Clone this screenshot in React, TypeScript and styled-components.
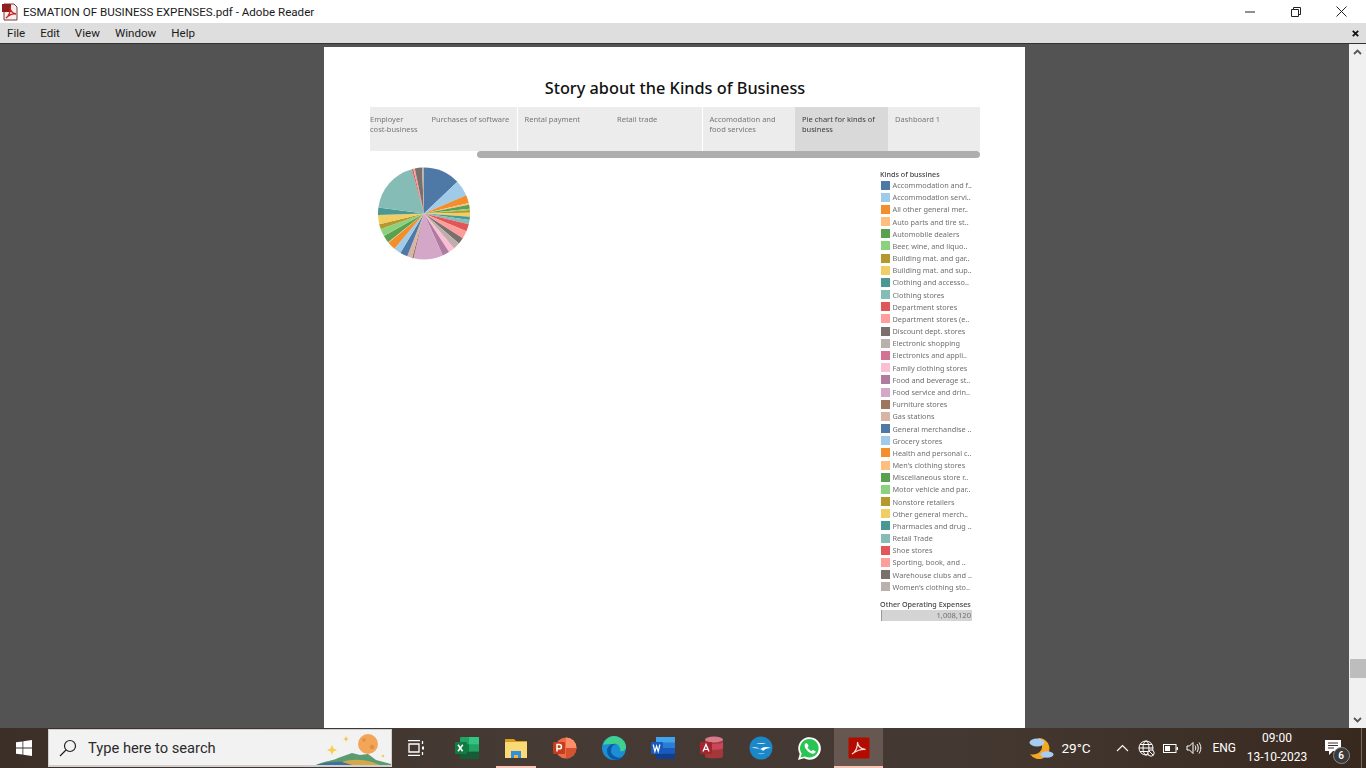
import React from 'react';
import styled, { createGlobalStyle } from 'styled-components';

const GlobalStyle = createGlobalStyle`
  html, body { margin: 0; padding: 0; height: 100%; overflow: hidden; background: #535353; }
  #root { height: 100%; }
`;

const Shell = styled.div`
  width: 1366px;
  height: 768px;
  display: flex;
  flex-direction: column;
  overflow: hidden;
  font-family: Roboto, 'Open Sans', sans-serif;
`;

/* title bar */
const TitleBar = styled.div`
  height: 23px;
  background: #fff;
  display: flex;
  align-items: center;
  padding: 0 2px 0 2px;
  flex: none;
`;
const TitleText = styled.div`
  margin-left: 4px;
  font-size: 11.6px;
  color: #1a1a1a;
  flex: 1;
`;
const WinButton = styled.div`
  width: 45.5px;
  height: 23px;
  display: flex;
  align-items: center;
  justify-content: center;
`;

const MenuBar = styled.div`
  height: 20px;
  background: #dedede;
  border-bottom: 1px solid #333;
  display: flex;
  align-items: center;
  padding: 0 7px 0 7px;
  gap: 15px;
  flex: none;
`;
const MenuItem = styled.span`
  font-size: 11.6px;
  color: #1c1c1c;
`;
const MenuClose = styled.span`
  margin-left: auto;
  display: flex;
`;

/* document viewing area */
const Workspace = styled.div`
  flex: 1;
  display: flex;
  min-height: 0;
  background: #535353;
`;
const PageArea = styled.div`
  flex: 1;
  padding: 3px 0 0 324px;
`;
const Page = styled.div`
  width: 701px;
  height: 100%;
  background: #fff;
  box-sizing: border-box;
  padding: 30px 45px 0 46px;
`;
const StoryTitle = styled.h1`
  margin: 0 0 7px;
  height: 23px;
  line-height: 23px;
  text-align: center;
  font-family: 'Noto Sans', sans-serif;
  font-size: 16.3px;
  font-weight: 500;
  color: #111;
`;
const TabStrip = styled.div`
  height: 44px;
  background: #ececec;
  display: flex;
`;
const Tab = styled.div<{ $w: number; $active?: boolean; $flush?: boolean; $sep?: boolean }>`
  width: ${(p) => p.$w}px;
  flex: none;
  box-sizing: border-box;
  padding: 7px 0 0 ${(p) => (p.$flush ? 0 : 7)}px;
  font-family: 'Noto Sans', sans-serif;
  font-size: 7.5px;
  line-height: 10.4px;
  color: ${(p) => (p.$active ? '#3c3c3c' : '#777')};
  background: ${(p) => (p.$active ? '#d9d9d9' : 'transparent')};
  border-right: ${(p) => (p.$sep ? '1px solid #fff' : 'none')};
  white-space: nowrap;
`;
const TabLabel = styled.span`
  display: block;
  filter: blur(0.3px);
`;
const ScrollTrack = styled.div`
  height: 7px;
  padding-left: 107px;
`;
const ScrollThumb = styled.div`
  height: 7px;
  background: #aeaeae;
  border-radius: 4px;
`;
const ChartRow = styled.div`
  display: flex;
  justify-content: space-between;
  padding: 9px 7px 0 7px;
`;
const PieSvg = styled.svg`
  width: 94px;
  height: 94px;
  filter: blur(0.25px);
`;
const Legend = styled.div`
  width: 93px;
  padding-top: 2px;
  font-family: 'Noto Sans', sans-serif;
  filter: blur(0.25px);
`;
const LegendTitle = styled.div`
  font-size: 7.2px;
  font-weight: 500;
  line-height: 10px;
  color: #444;
  white-space: nowrap;
`;
const LegendRow = styled.div`
  height: 12.18px;
  display: flex;
  align-items: center;
  padding-left: 1px;
`;
const Swatch = styled.span<{ $c: string }>`
  width: 9px;
  height: 9px;
  background: ${(p) => p.$c};
  flex: none;
  margin-right: 2.5px;
`;
const LegendLabel = styled.span`
  font-size: 7.3px;
  color: #707070;
  white-space: nowrap;
`;
const RangeTitle = styled(LegendTitle)`
  margin: 6px 0 0;
`;
const RangeBar = styled.div`
  margin: 1px 0 0 1px;
  width: 91px;
  height: 11px;
  box-sizing: border-box;
  background: #d4d4d4;
  border-left: 1px solid #999;
  font-size: 7.6px;
  line-height: 11px;
  text-align: right;
  padding-right: 1px;
  color: #707070;
`;

/* right hand scroll bar */
const ScrollBar = styled.div`
  width: 17px;
  flex: none;
  background: #f0f0f0;
  display: flex;
  flex-direction: column;
  align-items: center;
  justify-content: space-between;
  padding: 5px 0 5px;
  box-sizing: border-box;
`;
const ScrollHandle = styled.div`
  width: 16px;
  height: 19px;
  background: #bdbdbd;
  margin-top: auto;
  margin-bottom: 39px;
`;

/* taskbar */
const Taskbar = styled.div`
  height: 40px;
  flex: none;
  display: flex;
  align-items: center;
  background: linear-gradient(90deg, #3c2f28 0%, #463b34 40%, #443932 70%, #38291f 100%);
  color: #fff;
`;
const StartButton = styled.div`
  width: 48px;
  height: 40px;
  display: flex;
  align-items: center;
  justify-content: center;
`;
const SearchBox = styled.div`
  width: 344px;
  height: 38px;
  box-sizing: border-box;
  background: #f2f2f2;
  border: 1px solid #cfcfcf;
  border-bottom-width: 2px;
  display: flex;
  align-items: center;
  padding-left: 10px;
  overflow: hidden;
`;
const SearchText = styled.span`
  font-size: 14.7px;
  color: #2b2b2b;
  margin: 1px 0 0 11px;
  flex: 1;
`;
const TaskSlot = styled.div<{ $active?: boolean; $running?: boolean }>`
  width: 49px;
  height: 40px;
  flex: none;
  box-sizing: border-box;
  display: flex;
  align-items: center;
  justify-content: center;
  position: relative;
  background: ${(p) => (p.$active ? '#665851' : 'transparent')};
  &::after {
    content: '';
    display: ${(p) => (p.$active || p.$running ? 'block' : 'none')};
    position: absolute;
    bottom: 0;
    left: ${(p) => (p.$active ? 0 : 5)}px;
    right: ${(p) => (p.$active ? 0 : 4)}px;
    height: 2px;
    background: #f7c4b5;
  }
`;
const TaskView = styled(TaskSlot)`
  width: 50px;
  padding-right: 2px;
`;
const Tray = styled.div`
  margin-left: auto;
  display: flex;
  align-items: center;
  height: 40px;
`;
const Temp = styled.span`
  font-size: 13.6px;
  width: 29px;
  white-space: nowrap;
  margin: 0 20px 0 7px;
`;
const TrayIcon = styled.span`
  width: 24px;
  display: flex;
  justify-content: center;
`;
const TrayText = styled.span`
  font-size: 12px;
  margin: 0 10px 0 6px;
`;
const Clock = styled.div`
  width: 62px;
  text-align: center;
  font-size: 12px;
  line-height: 19px;
  white-space: nowrap;
`;
const Notify = styled.div`
  width: 35px;
  margin-left: 7.5px;
  margin-right: 10.5px;
  position: relative;
  display: flex;
  justify-content: center;
`;
const NotifyBadge = styled.span`
  position: absolute;
  left: 17px;
  top: 7px;
  width: 15px;
  height: 15px;
  border-radius: 50%;
  background: #3a3a3a;
  border: 1px solid #8c8c8c;
  font-size: 10px;
  font-weight: 600;
  line-height: 15px;
  text-align: center;
`;
const ShowDesktop = styled.span`
  width: 1px;
  height: 40px;
  background: rgba(255, 255, 255, 0.3);
  margin-right: 4px;
`;

const T = {
  blue: '#4e79a7',
  lblue: '#a0cbe8',
  orange: '#f28e2b',
  lorange: '#ffbe7d',
  green: '#59a14f',
  lgreen: '#8cd17d',
  olive: '#b6992d',
  yellow: '#f1ce63',
  teal: '#499894',
  lteal: '#86bcb6',
  red: '#e15759',
  pink: '#ff9d9a',
  gray: '#79706e',
  lgray: '#bab0ac',
  rose: '#d37295',
  lrose: '#fabfd2',
  purple: '#b07aa1',
  lpurple: '#d4a6c8',
  brown: '#9d7660',
  tan: '#d7b5a6',
};

// end angle of each slice, clockwise from 12 o'clock
const slices: [string, number][] = [
  [T.blue, 46.5],
  [T.lblue, 66.5],
  [T.orange, 76.8],
  [T.lorange, 79],
  [T.green, 84],
  [T.lgreen, 85.5],
  [T.olive, 89],
  [T.yellow, 94],
  [T.teal, 98],
  [T.lteal, 103.5],
  [T.red, 112.8],
  [T.pink, 122.6],
  [T.gray, 130.6],
  [T.lgray, 138],
  [T.rose, 139],
  [T.lrose, 147],
  [T.purple, 155.9],
  [T.lpurple, 193],
  [T.brown, 195],
  [T.tan, 201.4],
  [T.blue, 211],
  [T.lblue, 220],
  [T.orange, 230.6],
  [T.lorange, 231.5],
  [T.green, 240.7],
  [T.lgreen, 250.3],
  [T.olive, 256.6],
  [T.yellow, 268],
  [T.teal, 277.5],
  [T.lteal, 344.7],
  [T.red, 346.5],
  [T.pink, 348.5],
  [T.gray, 357.5],
  [T.lgray, 360],
];

const legend: [string, string][] = [
  [T.blue, 'Accommodation and f..'],
  [T.lblue, 'Accommodation servi..'],
  [T.orange, 'All other general mer..'],
  [T.lorange, 'Auto parts and tire st..'],
  [T.green, 'Automobile dealers'],
  [T.lgreen, 'Beer, wine, and liquo..'],
  [T.olive, 'Building mat. and gar..'],
  [T.yellow, 'Building mat. and sup..'],
  [T.teal, 'Clothing and accesso..'],
  [T.lteal, 'Clothing stores'],
  [T.red, 'Department stores'],
  [T.pink, 'Department stores (e..'],
  [T.gray, 'Discount dept. stores'],
  [T.lgray, 'Electronic shopping'],
  [T.rose, 'Electronics and appli..'],
  [T.lrose, 'Family clothing stores'],
  [T.purple, 'Food and beverage st..'],
  [T.lpurple, 'Food service and drin..'],
  [T.brown, 'Furniture stores'],
  [T.tan, 'Gas stations'],
  [T.blue, 'General merchandise ..'],
  [T.lblue, 'Grocery stores'],
  [T.orange, 'Health and personal c..'],
  [T.lorange, "Men's clothing stores"],
  [T.green, 'Miscellaneous store r..'],
  [T.lgreen, 'Motor vehicle and par..'],
  [T.olive, 'Nonstore retailers'],
  [T.yellow, 'Other general merch..'],
  [T.teal, 'Pharmacies and drug ..'],
  [T.lteal, 'Retail Trade'],
  [T.red, 'Shoe stores'],
  [T.pink, 'Sporting, book, and ..'],
  [T.gray, 'Warehouse clubs and ..'],
  [T.lgray, "Women's clothing sto.."],
];

const Pie = () => {
  const cx = 47;
  const cy = 46.5;
  const r = 46;
  const point = (deg: number) => {
    const a = (deg * Math.PI) / 180;
    return `${(cx + r * Math.sin(a)).toFixed(2)} ${(cy - r * Math.cos(a)).toFixed(2)}`;
  };
  let prev = 0;
  return (
    <PieSvg viewBox="0 0 94 94">
      {slices.map(([color, end], i) => {
        const d = `M${cx} ${cy}L${point(prev)}A${r} ${r} 0 ${end - prev > 180 ? 1 : 0} 1 ${point(end)}Z`;
        prev = end;
        return <path key={i} d={d} fill={color} />;
      })}
    </PieSvg>
  );
};

const PdfDoc = () => (
  <svg width="17" height="18" viewBox="0 0 17 18">
    <path d="M2 1h10l3 3v13H2z" fill="#f4eeee" stroke="#7a3a3a" />
    <rect x="0" y="1" width="9" height="8" fill="#8e1f1f" />
    <path d="M4 15c3-2 5-7 4-11 0 3 2 6 6 7-3-.5-7 1-10 4z" fill="none" stroke="#d0201c" strokeWidth="1.3" />
  </svg>
);

const ExcelIcon = () => (
  <svg width="26" height="24" viewBox="0 0 26 24">
    <rect x="6" y="1" width="19" height="22" rx="1" fill="#21a366" />
    <rect x="15" y="1" width="10" height="7.3" fill="#33c481" />
    <rect x="6" y="8.3" width="9" height="7.3" fill="#107c41" />
    <rect x="6" y="15.6" width="19" height="7.4" fill="#185c37" />
    <rect x="1" y="6" width="12" height="12" rx="1" fill="#107c41" />
    <path d="M4 8.7l4.6 6.6M8.8 8.7L4 15.3" stroke="#fff" strokeWidth="1.6" />
  </svg>
);

const FolderIcon = () => (
  <svg width="24" height="21" viewBox="0 0 24 21">
    <path d="M1 1h9l2 2h11v3H1z" fill="#d99f1c" />
    <rect x="1" y="4" width="22" height="16" fill="#fbd975" />
    <path d="M7 20v-7h10v7h-3v-3h-4v3z" fill="#2f8fe0" />
    <rect x="10" y="17" width="4" height="3" fill="#f5b92f" />
  </svg>
);

const PptIcon = () => (
  <svg width="25" height="24" viewBox="0 0 25 24">
    <circle cx="14" cy="12" r="10.5" fill="#ed6c47" />
    <path d="M14 1.500a10.500 10.500 0 0 1 10.500 10.500H14z" fill="#ff8f6b" />
    <path d="M14 12h10.500a10.500 10.500 0 0 1-10.500 10.500z" fill="#d35230" />
    <rect x="1" y="6" width="12" height="12" rx="1" fill="#c43e1c" />
    <path d="M5 15.500V8.500h2.300a2.100 2.100 0 0 1 0 4.300H5" fill="none" stroke="#fff" strokeWidth="1.5" />
  </svg>
);

const EdgeIcon = () => (
  <svg width="24" height="24" viewBox="0 0 24 24">
    <circle cx="12" cy="12" r="12" fill="#1b8fd6" />
    <path d="M1 9C3 3 8 0 12 0c6 0 12 5 12 11 0 3-3 5-6 4 1-3-1-7-6-7-5 0-9 0-11 1z" fill="#3fcf8e" />
    <path d="M9 15c0-5 4-8 8-6-5-3-12 0-12 6 0 5 5 9 10 9 2 0 4-1 6-3-5 2-12-1-12-6z" fill="#0c59a4" />
  </svg>
);

const WordIcon = () => (
  <svg width="26" height="24" viewBox="0 0 26 24">
    <rect x="6" y="1" width="19" height="22" rx="1" fill="#2b7cd3" />
    <rect x="6" y="1" width="19" height="5.500" fill="#41a5ee" />
    <rect x="6" y="12" width="19" height="5.500" fill="#185abd" />
    <rect x="6" y="17.500" width="19" height="5.500" fill="#103f91" />
    <rect x="1" y="6" width="12" height="12" rx="1" fill="#185abd" />
    <path d="M3.200 8.500l1.700 7 1.700-5.500 1.600 5.500 1.700-7" fill="none" stroke="#fff" strokeWidth="1.200" />
  </svg>
);

const AccessIcon = () => (
  <svg width="25" height="24" viewBox="0 0 25 24">
    <path d="M6 3.500C6 1.500 24 1.500 24 3.500v17c0 2.500-18 2.500-18 0z" fill="#a4373a" />
    <ellipse cx="15" cy="3.500" rx="9" ry="3" fill="#d97a8a" />
    <path d="M6 6c2 2.500 16 2.500 18 0v6c-2 2.500-16 2.500-18 0z" fill="#c8475a" />
    <rect x="1" y="6" width="12" height="12" rx="1" fill="#a4262c" />
    <path d="M4 15.500L7 8.500l3 7M5 13.300h4" fill="none" stroke="#fff" strokeWidth="1.300" />
  </svg>
);

const OfficeIcon = () => (
  <svg width="24" height="24" viewBox="0 0 24 24">
    <circle cx="12" cy="12" r="11.500" fill="#1a87c9" />
    <path d="M2 12c4-1.500 7-1 9 1.500C13 11 17 10 22 12c-4 0-6 1-8 3-1-2-5-3-12-3z" fill="#fff" />
    <path d="M7 8c3-1.500 7-1.500 10 0-3 0-7 0-10 0zM8 17c3 1.500 6 1.500 8 0-2.500.5-5.500.5-8 0z" fill="#cfe9f7" />
  </svg>
);

const WhatsAppIcon = () => (
  <svg width="25" height="25" viewBox="0 0 25 25">
    <path d="M1 24l1.700-6A11.300 11.300 0 1 1 7 22.300z" fill="#fff" />
    <path d="M3.500 21.500l1.200-3.900A9.300 9.300 0 1 1 7.800 20.400z" fill="#29c554" />
    <path
      d="M9.300 6.900c-.6 0-1.700 1-1.700 2.700 0 3.300 4.700 8.100 8.300 8.100 1.600 0 2.800-1.100 2.800-2.100 0-.5-2.300-1.700-2.800-1.700-.5 0-.9 1.100-1.400 1.100-1.200 0-3.900-2.700-3.900-3.700 0-.5.900-.9.900-1.400 0-.5-1-3-2.200-3z"
      fill="#fff"
    />
  </svg>
);

const AdobeIcon = () => (
  <svg width="22" height="22" viewBox="0 0 22 22">
    <rect x="0.500" y="0.500" width="21" height="21" rx="1" fill="#b30b00" />
    <path d="M4 17c4-2 6-8 5.500-12 0 3 2.500 7 8 7.500-4-.3-9.500 1.500-13.500 4.500z" fill="none" stroke="#f5dcdc" strokeWidth="1.300" />
  </svg>
);

const WeatherIcon = () => (
  <svg width="26" height="24" viewBox="0 0 26 24">
    <path d="M10 2a10.500 10.500 0 1 1-8 16c6 2 13-2 12-9 0-3-2-5-4-7z" fill="#f5a623" />
    <ellipse cx="9" cy="6.500" rx="7.500" ry="4" fill="#a9cdf0" />
    <ellipse cx="19" cy="18.500" rx="6.500" ry="3.200" fill="#a9cdf0" />
  </svg>
);

const SearchDecor = () => (
  <svg width="75" height="35" viewBox="0 0 75 35">
    <path d="M0 35c8-4 16-4 22-7l14-5 8 2 8-1 8 6 15 4v1z" fill="#5c9a72" />
    <path d="M0 35c10-3 20-4 30-3 8 1 12 3 18 3z" fill="#3e6f9e" />
    <path d="M26 32c8-3 20-3 30 0l8 3H36z" fill="#d1a84a" />
    <circle cx="52" cy="14" r="10" fill="#f2a65a" />
    <circle cx="48" cy="10" r="1.800" fill="#e18f3f" />
    <circle cx="56" cy="17" r="2.200" fill="#e18f3f" />
    <path d="M16 15l1.500 3.500L21 20l-3.500 1.500L16 25l-1.500-3.500L11 20l3.500-1.500z" fill="#f6cf4f" />
    <path d="M30 6l.8 2.200L33 9l-2.200.8L30 12l-.8-2.200L27 9l2.200-.8z" fill="#f6c244" />
    <circle cx="67" cy="26" r="1.300" fill="#f6cf4f" />
  </svg>
);

const App = () => (
  <Shell>
    <GlobalStyle />
    <TitleBar>
      <PdfDoc />
      <TitleText>ESMATION OF BUSINESS EXPENSES.pdf - Adobe Reader</TitleText>
      <WinButton>
        <svg width="10" height="10" viewBox="0 0 10 10">
          <path d="M0 5h10" stroke="#222" />
        </svg>
      </WinButton>
      <WinButton>
        <svg width="10" height="10" viewBox="0 0 10 10" fill="none" stroke="#222">
          <path d="M.5 2.500h7v7h-7zM2.500 2.500v-2h7v7h-2" />
        </svg>
      </WinButton>
      <WinButton>
        <svg width="11" height="11" viewBox="0 0 11 11">
          <path d="M.5.500l10 10M10.500.500l-10 10" stroke="#222" />
        </svg>
      </WinButton>
    </TitleBar>
    <MenuBar>
      <MenuItem>File</MenuItem>
      <MenuItem>Edit</MenuItem>
      <MenuItem>View</MenuItem>
      <MenuItem>Window</MenuItem>
      <MenuItem>Help</MenuItem>
      <MenuClose>
        <svg width="7" height="7" viewBox="0 0 7 7">
          <path d="M.8.800l5.400 5.400M6.200.800L.8 6.200" stroke="#111" strokeWidth="1.800" />
        </svg>
      </MenuClose>
    </MenuBar>
    <Workspace>
      <PageArea>
        <Page>
          <StoryTitle>Story about the Kinds of Business</StoryTitle>
          <TabStrip>
            <Tab $w={54.5} $flush>
              <TabLabel>Employer</TabLabel>
              <TabLabel>cost-business</TabLabel>
            </Tab>
            <Tab $w={93} $sep>
              <TabLabel>Purchases of software</TabLabel>
            </Tab>
            <Tab $w={92.5}>
              <TabLabel>Rental payment</TabLabel>
            </Tab>
            <Tab $w={92.5} $sep>
              <TabLabel>Retail trade</TabLabel>
            </Tab>
            <Tab $w={92.5}>
              <TabLabel>Accomodation and</TabLabel>
              <TabLabel>food services</TabLabel>
            </Tab>
            <Tab $w={93} $active>
              <TabLabel>Pie chart for kinds of</TabLabel>
              <TabLabel>business</TabLabel>
            </Tab>
            <Tab $w={92}>
              <TabLabel>Dashboard 1</TabLabel>
            </Tab>
          </TabStrip>
          <ScrollTrack>
            <ScrollThumb />
          </ScrollTrack>
          <ChartRow>
            <Pie />
            <Legend>
              <LegendTitle>Kinds of bussines</LegendTitle>
              {legend.map(([color, label]) => (
                <LegendRow key={label}>
                  <Swatch $c={color} />
                  <LegendLabel>{label}</LegendLabel>
                </LegendRow>
              ))}
              <RangeTitle>Other Operating Expenses</RangeTitle>
              <RangeBar>1,008,120</RangeBar>
            </Legend>
          </ChartRow>
        </Page>
      </PageArea>
      <ScrollBar>
        <svg width="9" height="6" viewBox="0 0 9 6">
          <path d="M1 5l3.500-3.500L8 5" fill="none" stroke="#555" strokeWidth="1.800" />
        </svg>
        <ScrollHandle />
        <svg width="9" height="6" viewBox="0 0 9 6">
          <path d="M1 1l3.500 3.500L8 1" fill="none" stroke="#555" strokeWidth="1.800" />
        </svg>
      </ScrollBar>
    </Workspace>
    <Taskbar>
      <StartButton>
        <svg width="16" height="16" viewBox="0 0 16 16" fill="#fff">
          <path d="M0 2.300l6.500-.9v6.200H0zM7.300 1.300L16 0v7.600H7.300zM0 8.400h6.500v6.200L0 13.700zM7.300 8.400H16V16l-8.700-1.300z" />
        </svg>
      </StartButton>
      <SearchBox>
        <svg width="18" height="18" viewBox="0 0 18 18" fill="none" stroke="#222" strokeWidth="1.200">
          <circle cx="11" cy="7" r="5.500" />
          <path d="M7 11l-6 6" />
        </svg>
        <SearchText>Type here to search</SearchText>
        <SearchDecor />
      </SearchBox>
      <TaskView>
        <svg width="18" height="16" viewBox="0 0 18 16" fill="none" stroke="#fff" strokeWidth="1.300">
          <path d="M1 .700h12M1 15.300h12M2 4h10v8H2zM15.500 1v3M15.500 12v3" />
          <rect x="15" y="6.500" width="2" height="3" fill="#fff" stroke="none" />
        </svg>
      </TaskView>
      <TaskSlot>
        <ExcelIcon />
      </TaskSlot>
      <TaskSlot $running>
        <FolderIcon />
      </TaskSlot>
      <TaskSlot>
        <PptIcon />
      </TaskSlot>
      <TaskSlot>
        <EdgeIcon />
      </TaskSlot>
      <TaskSlot>
        <WordIcon />
      </TaskSlot>
      <TaskSlot>
        <AccessIcon />
      </TaskSlot>
      <TaskSlot>
        <OfficeIcon />
      </TaskSlot>
      <TaskSlot>
        <WhatsAppIcon />
      </TaskSlot>
      <TaskSlot $active>
        <AdobeIcon />
      </TaskSlot>
      <Tray>
        <WeatherIcon />
        <Temp>29°C</Temp>
        <TrayIcon>
          <svg width="13" height="8" viewBox="0 0 13 8">
            <path d="M1 7l5.500-5.500L12 7" fill="none" stroke="#fff" strokeWidth="1.100" />
          </svg>
        </TrayIcon>
        <TrayIcon>
          <svg width="17" height="17" viewBox="0 0 17 17" fill="none" stroke="#fff">
            <circle cx="8" cy="8" r="7" />
            <ellipse cx="8" cy="8" rx="3" ry="7" />
            <path d="M1 8h14M2 4.500h12M2 11.500h12" />
            <circle cx="13" cy="13" r="3.200" fill="#3f332c" />
            <path d="M11 11l4 4" />
          </svg>
        </TrayIcon>
        <TrayIcon>
          <svg width="15" height="9" viewBox="0 0 15 9">
            <rect x=".5" y=".5" width="12.500" height="8" fill="none" stroke="#fff" />
            <rect x="2" y="2" width="5" height="5" fill="#fff" />
            <rect x="13.500" y="3" width="1.500" height="3" fill="#fff" />
          </svg>
        </TrayIcon>
        <TrayIcon>
          <svg width="16" height="14" viewBox="0 0 16 14" fill="none" stroke="#fff">
            <path d="M1 5h2.500L7 1.500v11L3.500 9H1z" />
            <path d="M9 4.500c1 1.500 1 3.500 0 5M11 3c1.700 2.500 1.700 5.500 0 8M13 1.500c2.400 3.500 2.400 7.500 0 11" />
          </svg>
        </TrayIcon>
        <TrayText>ENG</TrayText>
        <Clock>
          09:00
          <br />
          13-10-2023
        </Clock>
        <Notify>
          <svg width="17" height="16" viewBox="0 0 17 16">
            <path d="M0 0h16v11H8l-4 4v-4H0z" fill="#fff" />
            <path d="M3 3h10M3 5.500h10M3 8h6" stroke="#3f332c" />
          </svg>
          <NotifyBadge>6</NotifyBadge>
        </Notify>
        <ShowDesktop />
      </Tray>
    </Taskbar>
  </Shell>
);

export default App;
